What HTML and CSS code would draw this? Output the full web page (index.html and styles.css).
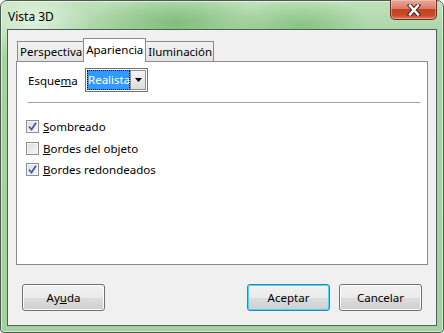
FILE: index.html
```html
<!DOCTYPE html>
<html>
<head>
<meta charset="utf-8">
<link rel="stylesheet" href="styles.css">
</head>
<body>
<div class="window">
  <div class="titlebar">
    <span class="title">Vista 3D</span>
    <div class="close">
      <svg width="20" height="12" viewBox="0 0 20 12">
        <path d="M6 1.5 L14 10.5 M14 1.5 L6 10.5" fill="none" stroke="#3a2a2a" stroke-width="4.4" stroke-linecap="square"/>
        <path d="M6 1.5 L14 10.5 M14 1.5 L6 10.5" fill="none" stroke="#ffffff" stroke-width="2.4" stroke-linecap="square"/>
      </svg>
    </div>
  </div>
  <div class="client">
    <div class="tabs">
      <div class="tab">Perspectiva</div>
      <div class="tab active">Apariencia</div>
      <div class="tab">Iluminación</div>
    </div>
    <div class="panel">
      <div class="row-scheme">
        <span class="label">Esque<u>m</u>a</span>
        <div class="combo">
          <span class="sel">Realista</span>
          <span class="arrow"><svg width="7" height="4" viewBox="0 0 7 4"><path d="M0 0 H7 L3.5 4 Z" fill="#000"/></svg></span>
        </div>
      </div>
      <div class="sep"></div>
      <div class="checks">
        <label class="check"><span class="box on"><svg width="9" height="9" viewBox="0 0 9 9"><path d="M1 4.5 L3.5 7.5 L8 0.8" fill="none" stroke="#3c5fa8" stroke-width="1.8"/></svg></span><span><u>S</u>ombreado</span></label>
        <label class="check"><span class="box"></span><span><u>B</u>ordes del objeto</span></label>
        <label class="check"><span class="box on"><svg width="9" height="9" viewBox="0 0 9 9"><path d="M1 4.5 L3.5 7.5 L8 0.8" fill="none" stroke="#3c5fa8" stroke-width="1.8"/></svg></span><span><u>B</u>ordes redondeados</span></label>
      </div>
    </div>
    <div class="buttons">
      <div class="btn">Ay<u>u</u>da</div>
      <div class="spacer"></div>
      <div class="btn default">Aceptar</div>
      <div class="btn">Cancelar</div>
    </div>
  </div>
</div>
</body>
</html>
```
FILE: styles.css
```css
* { box-sizing: border-box; }
html, body { margin: 0; padding: 0; background: #ffffff; }
body { font-family: "Noto Sans", "DejaVu Sans", sans-serif; font-size: 11.5px; color: #000; }

.window {
  width: 444px;
  height: 333px;
  border: 1px solid #4b5b4b;
  border-radius: 7px 7px 4px 4px;
  padding: 0 6px 6px 6px;
  display: flex;
  flex-direction: column;
  background:
    radial-gradient(ellipse 90px 30px at 175px 22px, rgba(120,185,115,0.85), rgba(120,185,115,0) 100%),
    radial-gradient(ellipse 70px 28px at 300px 26px, rgba(125,190,120,0.8), rgba(125,190,120,0) 100%),
    radial-gradient(ellipse 60px 40px at 30px 20px, rgba(230,245,228,0.9), rgba(230,245,228,0) 100%),
    linear-gradient(#bfe1bb, #a7d3a2 40px, #a3d09e);
  box-shadow: inset 0 0 0 1px rgba(255,255,255,0.55);
}

.titlebar {
  height: 28px;
  position: relative;
  display: flex;
  align-items: center;
}
.title {
  padding-left: 1px;
  padding-top: 2px;
  font-size: 12px;
}
.close {
  position: absolute;
  right: -0px;
  top: -1px;
  width: 47px;
  height: 20px;
  border: 1px solid #6d2e22;
  border-top: none;
  border-radius: 0 0 5px 5px;
  background: linear-gradient(#e9a898 0%, #da7d66 45%, #c4411f 50%, #c84a2b 80%, #dd7a5c 100%);
  display: flex;
  align-items: center;
  justify-content: center;
  box-shadow: inset 0 0 0 1px rgba(255,220,210,0.4);
}

.client {
  flex: 1;
  border: 1px solid #4e5e5e;
  background: #f0f0f0;
  display: flex;
  flex-direction: column;
  padding: 8px 8px 13px 8px;
}

.tabs {
  display: flex;
  align-items: flex-end;
  height: 23px;
  padding-left: 1px;
  position: relative;
  z-index: 1;
}
.tab {
  height: 20px;
  padding: 1px 1px 0 2px;
  border: 1px solid #898c95;
  border-bottom: none;
  background: linear-gradient(#f2f2f2, #e3e3e3);
  line-height: 17px;
  margin-left: -1px;
}
.tab:first-child { margin-left: 0; }
.tab.active {
  background: #ffffff;
  padding: 0 2px 0 2px;
  line-height: 21px;
  margin-bottom: -1px;
  height: 24px;
  position: relative;
  z-index: 2;
}

.panel {
  height: 204px;
  border: 1px solid #898c95;
  background: #ffffff;
  padding: 6px 7px 0 11px;
}
.row-scheme {
  display: flex;
  align-items: center;
  height: 24px;
}
.label { width: 57px; }
.combo {
  display: flex;
  width: 63px;
  height: 24px;
  border: 1px solid #707070;
  background: #fff;
  padding: 1px;
}
.sel {
  flex: 1;
  background: #3399ff;
  color: #fff;
  outline: 1px dotted #000;
  outline-offset: -1px;
  line-height: 20px;
  padding-left: 1px;
  overflow: hidden;
  white-space: nowrap;
}
.arrow {
  width: 16px;
  border: 1px solid #8f8f8f;
  background: linear-gradient(#f4f4f4, #dcdcdc);
  display: flex;
  align-items: center;
  justify-content: center;
}
.sep {
  height: 1px;
  background: #a0a0a0;
  margin-top: 10px;
}
.checks {
  padding-top: 17px;
  padding-left: 0;
  display: flex;
  flex-direction: column;
  gap: 8px;
}
.check {
  display: flex;
  align-items: center;
  gap: 4px;
  height: 13.5px;
  margin-left: -2px;
}
.box {
  width: 13px;
  height: 13px;
  border: 1px solid #8e8f8f;
  background: linear-gradient(135deg, #dcdcdc, #f8f8f8);
  box-shadow: inset 0 0 0 1px #f4f4f4;
  display: flex;
  align-items: center;
  justify-content: center;
}

.buttons {
  display: flex;
  margin-top: 19px;
  padding: 0 6px;
  gap: 9px;
}
.spacer { flex: 1; }
.btn {
  width: 83px;
  height: 27px;
  border: 1px solid #707070;
  border-radius: 3px;
  background: linear-gradient(#f2f2f2 0%, #ebebeb 50%, #dddddd 51%, #cfcfcf 100%);
  box-shadow: inset 0 0 0 1px #fcfcfc;
  display: flex;
  align-items: center;
  justify-content: center;
}
.btn.default {
  border-color: #3c7fb1;
  box-shadow: inset 0 0 0 1px #48d7f7;
}
```
